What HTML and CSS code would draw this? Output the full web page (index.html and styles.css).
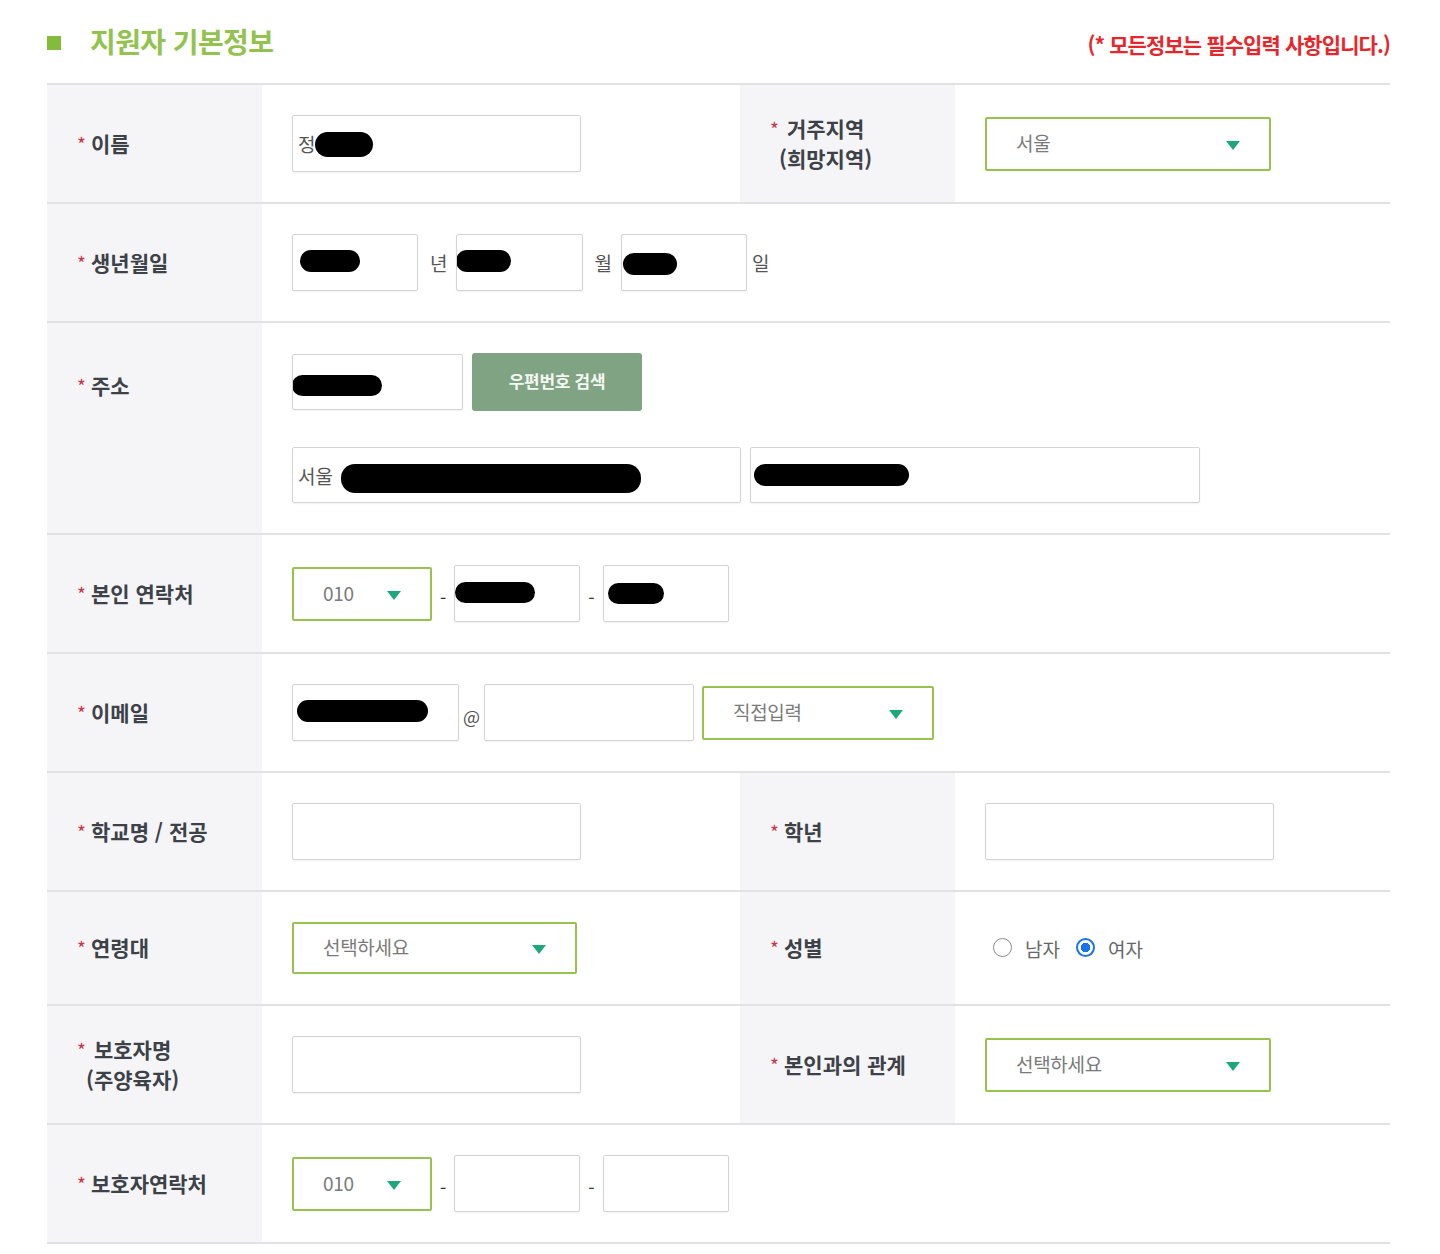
FILE: index.html
```html
<!DOCTYPE html>
<html lang="ko">
<head>
<meta charset="utf-8">
<title>지원자 기본정보</title>
<link rel="stylesheet" href="styles.css">
</head>
<body>
<div class="page">
  <div class="head">
    <h2 class="title"><span class="sq"></span>지원자 기본정보</h2>
    <p class="note">(* 모든정보는 필수입력 사항입니다.)</p>
  </div>

  <div class="form">
    <div class="row">
      <div class="th"><div class="lbl"><span class="req">*</span><span class="ltxt">이름</span></div></div>
      <div class="td">
        <div class="inp w289"><span class="val">정</span><span class="blot b-name"></span></div>
      </div>
      <div class="th"><div class="lbl"><span class="req">*</span><span class="ltxt two">거주지역<br>(희망지역)</span></div></div>
      <div class="td">
        <div class="sel w286"><span class="opt">서울</span><span class="arr"></span></div>
      </div>
    </div>

    <div class="row">
      <div class="th"><div class="lbl"><span class="req">*</span><span class="ltxt">생년월일</span></div></div>
      <div class="td full">
        <div class="inp w126"><span class="blot b-y"></span></div>
        <span class="unit u-y">년</span>
        <div class="inp w127"><span class="blot b-m"></span></div>
        <span class="unit u-m">월</span>
        <div class="inp w126"><span class="blot b-d"></span></div>
        <span class="unit u-d">일</span>
      </div>
    </div>

    <div class="row">
      <div class="th top"><div class="lbl"><span class="req">*</span><span class="ltxt">주소</span></div></div>
      <div class="td full col">
        <div class="line">
          <div class="inp zip"><span class="blot b-zip"></span></div>
          <button class="btn" type="button">우편번호 검색</button>
        </div>
        <div class="line">
          <div class="inp addr"><span class="val">서울</span><span class="blot b-addr1"></span></div>
          <div class="inp addr2"><span class="blot b-addr2"></span></div>
        </div>
      </div>
    </div>

    <div class="row">
      <div class="th"><div class="lbl"><span class="req">*</span><span class="ltxt">본인 연락처</span></div></div>
      <div class="td full">
        <div class="sel w140"><span class="opt">010</span><span class="arr"></span></div>
        <span class="dash">-</span>
        <div class="inp w126"><span class="blot b-p2"></span></div>
        <span class="dash">-</span>
        <div class="inp w126"><span class="blot b-p3"></span></div>
      </div>
    </div>

    <div class="row">
      <div class="th"><div class="lbl"><span class="req">*</span><span class="ltxt">이메일</span></div></div>
      <div class="td full">
        <div class="inp w167"><span class="blot b-mail"></span></div>
        <span class="at">@</span>
        <div class="inp w210"></div>
        <div class="sel w232 ml8"><span class="opt">직접입력</span><span class="arr"></span></div>
      </div>
    </div>

    <div class="row">
      <div class="th"><div class="lbl"><span class="req">*</span><span class="ltxt">학교명 / 전공</span></div></div>
      <div class="td">
        <div class="inp w289"></div>
      </div>
      <div class="th"><div class="lbl"><span class="req">*</span><span class="ltxt">학년</span></div></div>
      <div class="td">
        <div class="inp w289"></div>
      </div>
    </div>

    <div class="row">
      <div class="th"><div class="lbl"><span class="req">*</span><span class="ltxt">연령대</span></div></div>
      <div class="td">
        <div class="sel w285 h52"><span class="opt">선택하세요</span><span class="arr"></span></div>
      </div>
      <div class="th"><div class="lbl"><span class="req">*</span><span class="ltxt">성별</span></div></div>
      <div class="td radios">
        <span class="radio"></span><span class="rtxt">남자</span>
        <span class="radio on"></span><span class="rtxt">여자</span>
      </div>
    </div>

    <div class="row">
      <div class="th"><div class="lbl"><span class="req">*</span><span class="ltxt two">보호자명<br>(주양육자)</span></div></div>
      <div class="td">
        <div class="inp w289"></div>
      </div>
      <div class="th"><div class="lbl"><span class="req">*</span><span class="ltxt">본인과의 관계</span></div></div>
      <div class="td">
        <div class="sel w286"><span class="opt">선택하세요</span><span class="arr"></span></div>
      </div>
    </div>

    <div class="row">
      <div class="th"><div class="lbl"><span class="req">*</span><span class="ltxt">보호자연락처</span></div></div>
      <div class="td full">
        <div class="sel w140"><span class="opt">010</span><span class="arr"></span></div>
        <span class="dash">-</span>
        <div class="inp w126"></div>
        <span class="dash">-</span>
        <div class="inp w126"></div>
      </div>
    </div>
  </div>
</div>
</body>
</html>
```

FILE: styles.css
```css
* { box-sizing: border-box; }

html, body {
  margin: 0;
  padding: 0;
  background: #ffffff;
}

body {
  font-family: "Noto Sans CJK KR", "Noto Sans", sans-serif;
  color: #333;
}

.page {
  width: 1343px;
  margin-left: 47px;
}

/* header */
.head {
  height: 83px;
  display: flex;
  align-items: center;
  justify-content: space-between;
}

.title {
  margin: 0;
  display: flex;
  align-items: center;
  font-size: 28px;
  font-weight: 700;
  color: #92c34e;
  letter-spacing: -0.6px;
  line-height: 1;
  padding-bottom: 2px;
}

.sq {
  width: 14px;
  height: 14px;
  background: #85bb3b;
  margin-right: 29px;
  margin-top: 4px;
}

.note {
  margin: 6px 0 0;
  font-size: 21px;
  font-weight: 700;
  color: #e7262c;
  letter-spacing: -0.9px;
  line-height: 1;
}

/* form table */
.form {
  border-top: 2px solid #e2e2e6;
}

.row {
  display: grid;
  grid-template-columns: 215px 478px 215px 1fr;
  border-bottom: 2px solid #e2e2e6;
}

.th {
  background: #f5f5f7;
  display: flex;
  align-items: center;
  padding: 0 10px 0 31px;
}

.th.top {
  align-items: flex-start;
  padding-top: 48px;
}

.lbl {
  display: flex;
  align-items: flex-start;
  font-size: 21px;
  font-weight: 700;
  color: #3d4148;
  line-height: 30px;
  margin-top: -1px;
}

.ltxt {
  text-align: center;
}

.ltxt.two {
  margin-left: -5px;
}

.req {
  color: #c9354b;
  font-size: 19px;
  font-weight: 400;
  width: 14px;
  line-height: 30px;
  margin-top: 1px;
  margin-left: -1px;
  flex: none;
}

.td {
  display: flex;
  align-items: center;
  padding: 30px;
}

.td.full {
  grid-column: 2 / 5;
}

.td.col {
  flex-direction: column;
  align-items: flex-start;
  gap: 36px;
}

.line {
  display: flex;
  align-items: center;
}

/* inputs */
.inp {
  height: 57px;
  border: 1px solid #d4d4d6;
  border-radius: 2px;
  background: #fff;
  box-shadow: 0 1px 2px rgba(0, 0, 0, 0.06);
  display: flex;
  align-items: center;
  overflow: hidden;
}

.val {
  font-size: 19px;
  color: #555;
  margin-left: 5px;
}

.w126 { width: 126px; }
.w127 { width: 127px; }
.w167 { width: 167px; }
.w210 { width: 210px; }
.w289 { width: 289px; }
.zip { width: 171px; height: 56px; }
.addr { width: 449px; height: 56px; }
.addr2 { width: 450px; height: 56px; margin-left: 9px; }

/* redaction marks */
.blot {
  background: #000;
  border-radius: 14px;
  flex: none;
}
.b-name { width: 58px; height: 25px; margin-left: 0; margin-top: 2px; }
.b-y { width: 60px; height: 22px; margin-left: 7px; margin-top: -4px; }
.b-m { width: 55px; height: 22px; margin-left: -1px; margin-top: -4px; }
.b-d { width: 54px; height: 22px; margin-left: 1px; margin-top: 2px; }
.b-zip { width: 90px; height: 21px; margin-left: -1px; margin-top: 6px; }
.b-addr1 { width: 300px; height: 29px; margin-left: 8px; margin-top: 6px; }
.b-addr2 { width: 155px; height: 22px; margin-left: 3px; }
.b-p2 { width: 80px; height: 21px; margin-left: 0; margin-top: -2px; }
.b-p3 { width: 56px; height: 21px; margin-left: 4px; }
.b-mail { width: 131px; height: 22px; margin-left: 4px; margin-top: -4px; }

/* selects */
.sel {
  height: 54px;
  border: 2px solid #98c24e;
  border-radius: 2px;
  background: #fff;
  display: flex;
  align-items: center;
  justify-content: space-between;
  padding: 0 29px 0 29px;
}

.sel.h52 { height: 52px; }
.w140 { width: 140px; }
.w232 { width: 232px; }
.w285 { width: 285px; }
.w286 { width: 286px; }
.ml8 { margin-left: 8px; }

.opt {
  font-size: 19px;
  color: #7a7a7a;
  letter-spacing: -0.3px;
  margin-top: -3px;
}

.arr {
  width: 0;
  height: 0;
  border-left: 7.5px solid transparent;
  border-right: 7.5px solid transparent;
  border-top: 9px solid #1ea77c;
  margin-top: 3px;
}

/* units and separators */
.unit {
  font-size: 19px;
  color: #555;
}
.u-y { margin: 0 9px 0 12px; }
.u-m { margin: 0 9px 0 11px; }
.u-d { margin-left: 5px; }

.dash {
  font-size: 18px;
  color: #333;
  margin: 6px 8px 0 8px;
}

.at {
  font-size: 18px;
  color: #555;
  width: 25px;
  text-align: center;
  margin-top: 6px;
}

/* button */
.btn {
  width: 170px;
  height: 58px;
  margin-left: 9px;
  border: 0;
  border-radius: 3px;
  background: #7fa383;
  color: #f4f7f2;
  font-family: "Noto Sans CJK KR", "Noto Sans", sans-serif;
  font-size: 17px;
  font-weight: 700;
  letter-spacing: -0.3px;
  padding: 0 0 4px;
}

/* radios */
.radios {
  padding-left: 38px;
}

.radio {
  width: 19px;
  height: 19px;
  border-radius: 50%;
  border: 1px solid #8a8a8a;
  background: #fff;
  margin-top: -2px;
}

.radio.on {
  border: 2px solid #1a73e8;
  background: radial-gradient(circle, #1a73e8 0 4.5px, #fff 5px);
}

.rtxt {
  font-size: 19px;
  color: #666;
  margin-left: 13px;
  margin-right: 16px;
}
```
